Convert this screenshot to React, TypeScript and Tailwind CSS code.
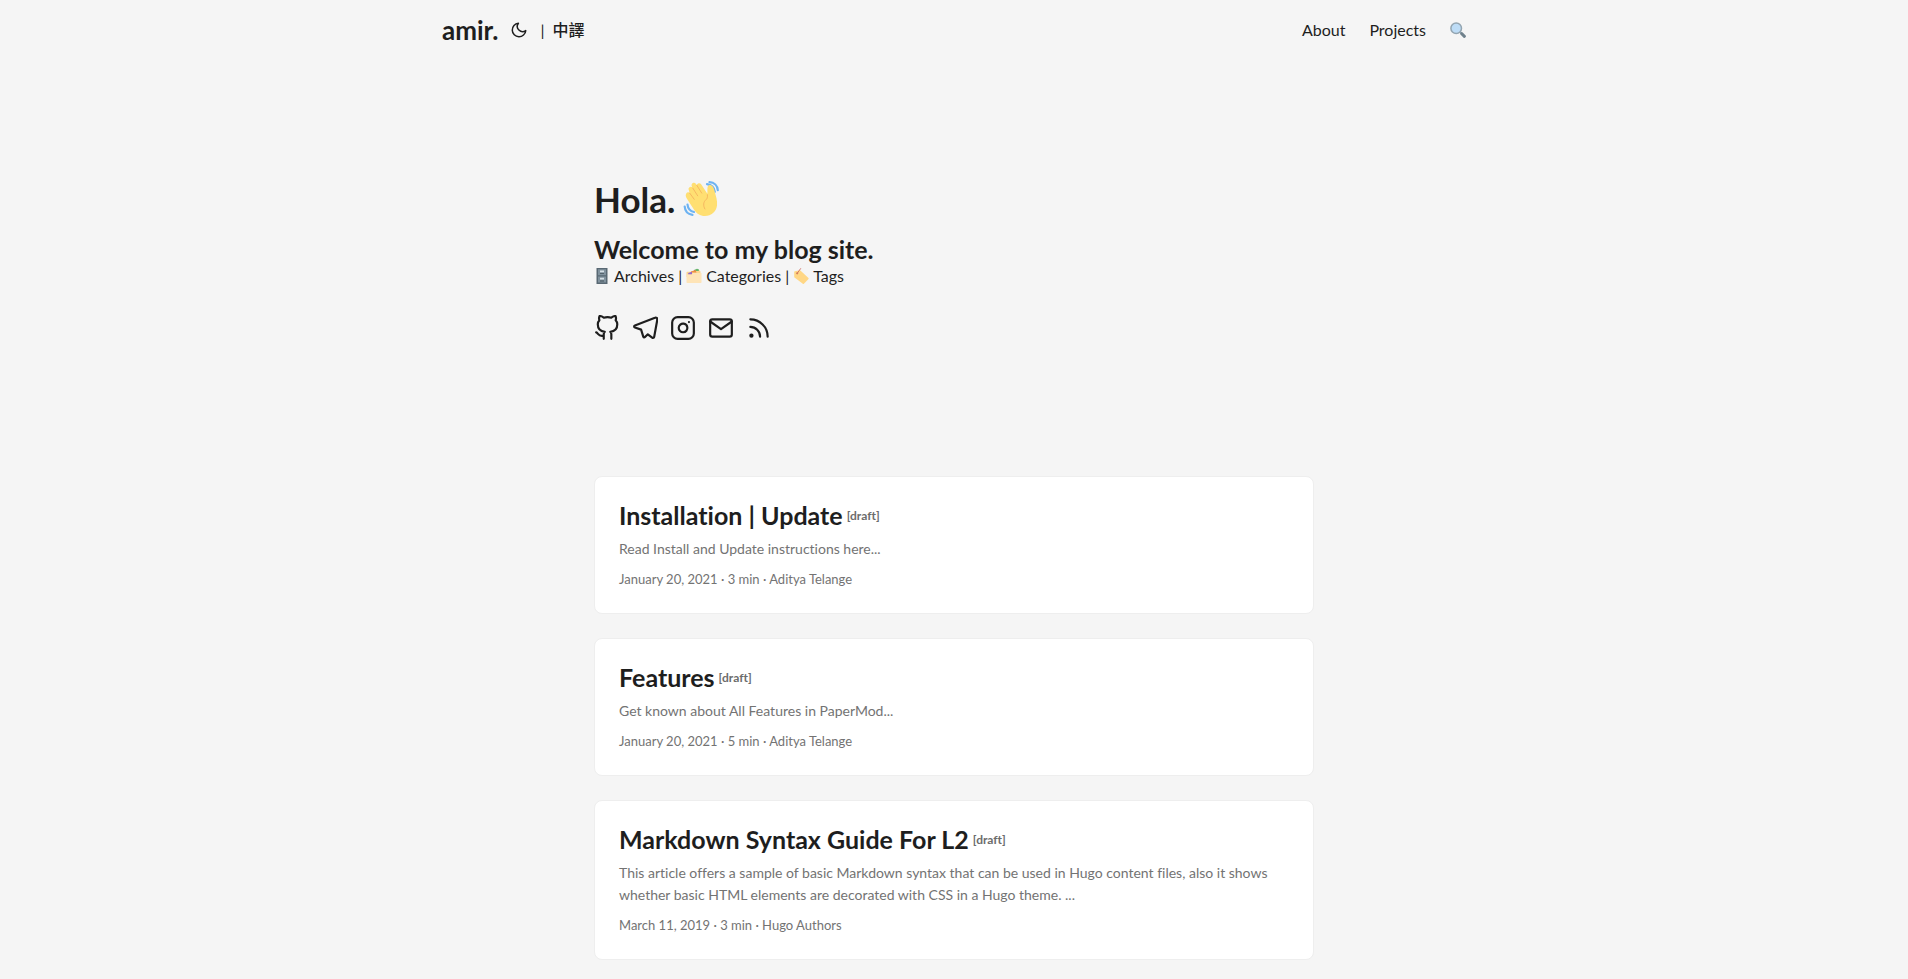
import type { ReactNode } from 'react';

type Post = { title: string; summary: string; meta: string };

const posts: Post[] = [
  {
    title: 'Installation | Update',
    summary: 'Read Install and Update instructions here...',
    meta: 'January 20, 2021 · 3 min · Aditya Telange',
  },
  {
    title: 'Features',
    summary: 'Get known about All Features in PaperMod...',
    meta: 'January 20, 2021 · 5 min · Aditya Telange',
  },
  {
    title: 'Markdown Syntax Guide For L2',
    summary:
      'This article offers a sample of basic Markdown syntax that can be used in Hugo content files, also it shows whether basic HTML elements are decorated with CSS in a Hugo theme. ...',
    meta: 'March 11, 2019 · 3 min · Hugo Authors',
  },
];

function WaveIcon() {
  return (
    <svg viewBox="0 0 36 36" className="size-9" role="img" aria-label="Waving hand">
      <g fill="none" stroke="#6db3f2" strokeWidth="2.200" strokeLinecap="round">
        <path d="M24 3.200c4.500 .6 7.300 3.500 7.800 7.800" />
        <path d="M26.500 1.200c4.700 .2 8 3.300 8.300 8" />
        <path d="M1.700 25.500c.3 4.900 3.100 7.700 7.800 8.300" />
        <path d="M4.500 23.500c.4 4.300 2.700 6.700 6.500 7.500" />
      </g>
      <path
        fill="#ffdf72"
        d="M3.400 12.200c.8-1.200 2.200-1.200 3.200-.2L5.900 9.300C5 7.800 5.800 6.500 7 6c1-.4 2 0 2.700.9L8.900 5.600c-.8-1.500-.2-2.900 1-3.500 1.200-.6 2.300-.1 3.100 1l.8 1.200c.1-1.200.9-2 2-2.100 1-.1 1.800.3 2.500 1.300l6.100 9.200c.1-2.700-.2-5.500.3-7 .5-1.400 2-2 3.400-1.500 2 .7 2.600 2.600 3.400 5.600 1.400 5.500 3.100 9.500 2.500 14.700-.7 6-5.700 10.500-12 10.500-5 0-8.300-2.300-11.100-6.500L3.800 17.600c-1.300-2.100-1.400-4-.4-5.400z"
      />
      <path
        d="M6.600 12l4.600 6.300M9.700 7l5 7.800M13.800 4.300l4.900 7.800M24.400 13.700c.3 2.500-.1 4-1.600 5.200-2.400 2-2.900 5.700-.9 9.100"
        fill="none"
        stroke="#f2ad5c"
        strokeWidth=".8"
        strokeLinecap="round"
      />
    </svg>
  );
}

function CabinetIcon() {
  return (
    <svg viewBox="0 0 16 16" className="size-4" aria-hidden="true">
      <path fill="#596873" d="M2.500 0h11v16h-11z" />
      <path fill="#81929e" d="M4 1.300h8v5.900H4zM4 8.600h8v6H4z" />
      <path fill="#d6e0e6" d="M6 2.400h4v1.900H6zM6 9.700h4v1.900H6z" />
      <path fill="#46545d" d="M6 5.200h4v.9H6zM6 12.500h4v.9H6z" />
    </svg>
  );
}

function FolderIcon() {
  return (
    <svg viewBox="0 0 16 16" className="size-4" aria-hidden="true">
      <path fill="#fdd68f" d="M.5 4.500q0-.8.800-.8H4L10 2h3l1.500 1.500V9H.5z" />
      <path fill="#67b56c" d="m8 2 3-1.300 1.800.6v1.700H8z" />
      <path fill="#ef8d45" d="M5 3.600 9.500 2l1 2.500H5z" />
      <path fill="#9369c7" d="M2.200 5.100 6 3.800v2.700H2.200z" />
      <path fill="#fee4b7" d="M.5 6.500h5L7 5h8.500v9.200q0 .8-.8.800H1.300q-.8 0-.8-.8z" />
    </svg>
  );
}

function TagIcon() {
  return (
    <svg viewBox="0 0 16 16" className="size-4" aria-hidden="true">
      <path fill="#ffd785" d="M1.200 4.200q0-.8.700-.9l5.200-1 8.100 7.500q.8.700.1 1.400l-4.400 4.500q-.7.700-1.400-.1L1.200 9.200z" />
      <circle cx="4.200" cy="5.300" r="1.100" fill="#d78658" />
      <path d="M4.200 5.300 7.600.6" fill="none" stroke="#cf6d62" strokeWidth=".9" strokeLinecap="round" />
    </svg>
  );
}

function SearchIcon() {
  return (
    <svg viewBox="0 0 16 16" className="size-4" aria-hidden="true">
      <path d="m9.700 9.700 2 2" stroke="#8fa1ad" strokeWidth="1.600" />
      <path d="m11.700 11.700 2.700 2.600" stroke="#6f818c" strokeWidth="3" strokeLinecap="round" />
      <circle cx="6.200" cy="6.200" r="5.300" fill="#bddcf6" stroke="#93a5b1" strokeWidth="1.500" />
    </svg>
  );
}

function Social({ label, children }: { label: string; children: ReactNode }) {
  return (
    <a href="#" aria-label={label}>
      <svg
        viewBox="0 0 24 24"
        className="size-[26px]"
        fill="none"
        stroke="currentColor"
        strokeWidth="2"
        strokeLinecap="round"
        strokeLinejoin="round"
      >
        {children}
      </svg>
    </a>
  );
}

function Header() {
  return (
    <header className="mx-auto flex h-[60px] w-full max-w-[1072px] items-center justify-between px-6">
      <div className="flex items-center">
        <a href="#" className="text-[26px] font-bold">
          amir.
        </a>
        <button type="button" aria-label="Toggle theme" className="ml-3 cursor-pointer">
          <svg
            viewBox="0 0 24 24"
            className="size-[18px]"
            fill="none"
            stroke="currentColor"
            strokeWidth="2"
            strokeLinecap="round"
            strokeLinejoin="round"
          >
            <path d="M21 12.790A9 9 0 1 1 11.210 3 7 7 0 0 0 21 12.790z" />
          </svg>
        </button>
        <span className="ml-3">|</span>
        <a href="#" lang="zh-Hant" className="ml-2 font-medium">
          中譯
        </a>
      </div>
      <nav className="flex items-center gap-6">
        <a href="#">About</a>
        <a href="#">Projects</a>
        <a href="#" aria-label="Search">
          <SearchIcon />
        </a>
      </nav>
    </header>
  );
}

function Hero() {
  return (
    <section className="mt-6 mb-12 flex min-h-80 flex-col justify-center">
      <h1 className="flex items-center gap-2 text-[35px] leading-[44px] font-bold">
        Hola. <WaveIcon />
      </h1>
      <h2 className="mt-3 text-[25px] leading-8 font-bold">Welcome to my blog site.</h2>
      <div className="flex items-center gap-1 leading-[22px]">
        <a href="#" className="flex items-center gap-1">
          <CabinetIcon /> Archives
        </a>
        <span>|</span>
        <a href="#" className="flex items-center gap-1">
          <FolderIcon /> Categories
        </a>
        <span>|</span>
        <a href="#" className="flex items-center gap-1">
          <TagIcon /> Tags
        </a>
      </div>
      <div className="mt-7 mb-[18px] flex gap-3">
        <Social label="GitHub">
          <path d="M9 19c-5 1.500-5-2.500-7-3m14 6v-3.870a3.370 3.370 0 0 0-.94-2.610c3.140-.35 6.440-1.540 6.440-7A5.440 5.440 0 0 0 20 4.770 5.070 5.070 0 0 0 19.910 1S18.730.65 16 2.480a13.380 13.380 0 0 0-7 0C6.270.65 5.090 1 5.090 1A5.070 5.070 0 0 0 5 4.770a5.440 5.440 0 0 0-1.500 3.780c0 5.420 3.300 6.610 6.440 7A3.370 3.370 0 0 0 9 18.130V22" />
        </Social>
        <Social label="Telegram">
          <path d="M21.200 2.600 2.700 9.700c-1 .4-1 1.500 0 1.900l5.700 1.900 2 6.400c.3.9 1 1 1.600.4l2.600-2.500 4 3c.8.600 1.700.3 1.900-.7L23.400 4.200c.2-1.300-1-2.100-2.200-1.600z" />
        </Social>
        <Social label="Instagram">
          <rect x="2" y="2" width="20" height="20" rx="5" ry="5" />
          <path d="M16 11.370A4 4 0 1 1 12.630 8 4 4 0 0 1 16 11.370z" />
          <path d="M17.500 6.500h.01" />
        </Social>
        <Social label="Email">
          <path d="M4 4h16c1.100 0 2 .9 2 2v12c0 1.100-.9 2-2 2H4c-1.100 0-2-.9-2-2V6c0-1.100.9-2 2-2z" />
          <path d="m22 6-10 7L2 6" />
        </Social>
        <Social label="RSS">
          <path d="M4 11a9 9 0 0 1 9 9M4 4a16 16 0 0 1 16 16" />
          <circle cx="5" cy="19" r="1" />
        </Social>
      </div>
    </section>
  );
}

function PostCard({ post }: { post: Post }) {
  return (
    <article className="mb-6 rounded-lg border border-[#eeeeee] bg-white px-6 pt-[23px] pb-6">
      <h2 className="flex items-center gap-1 text-[25px] leading-[31px] font-bold">
        <a href="#">{post.title}</a>
        <span className="text-xs text-[#6c6c6c]">[draft]</span>
      </h2>
      <p className="mt-[7px] text-sm leading-[22px] text-[#737373]">{post.summary}</p>
      <footer className="mt-[9px] text-[13px] leading-5 text-[#737373]">{post.meta}</footer>
    </article>
  );
}

export default function App() {
  return (
    <div className="min-h-screen bg-[#f5f5f5] font-['Lato','Noto_Sans_CJK_TC',sans-serif] text-base text-[#1e1e1e] [font-variant-ligatures:none]">
      <Header />
      <main className="mx-auto w-full max-w-[768px] px-6 pt-6">
        <Hero />
        {posts.map((post) => (
          <PostCard key={post.title} post={post} />
        ))}
      </main>
    </div>
  );
}
